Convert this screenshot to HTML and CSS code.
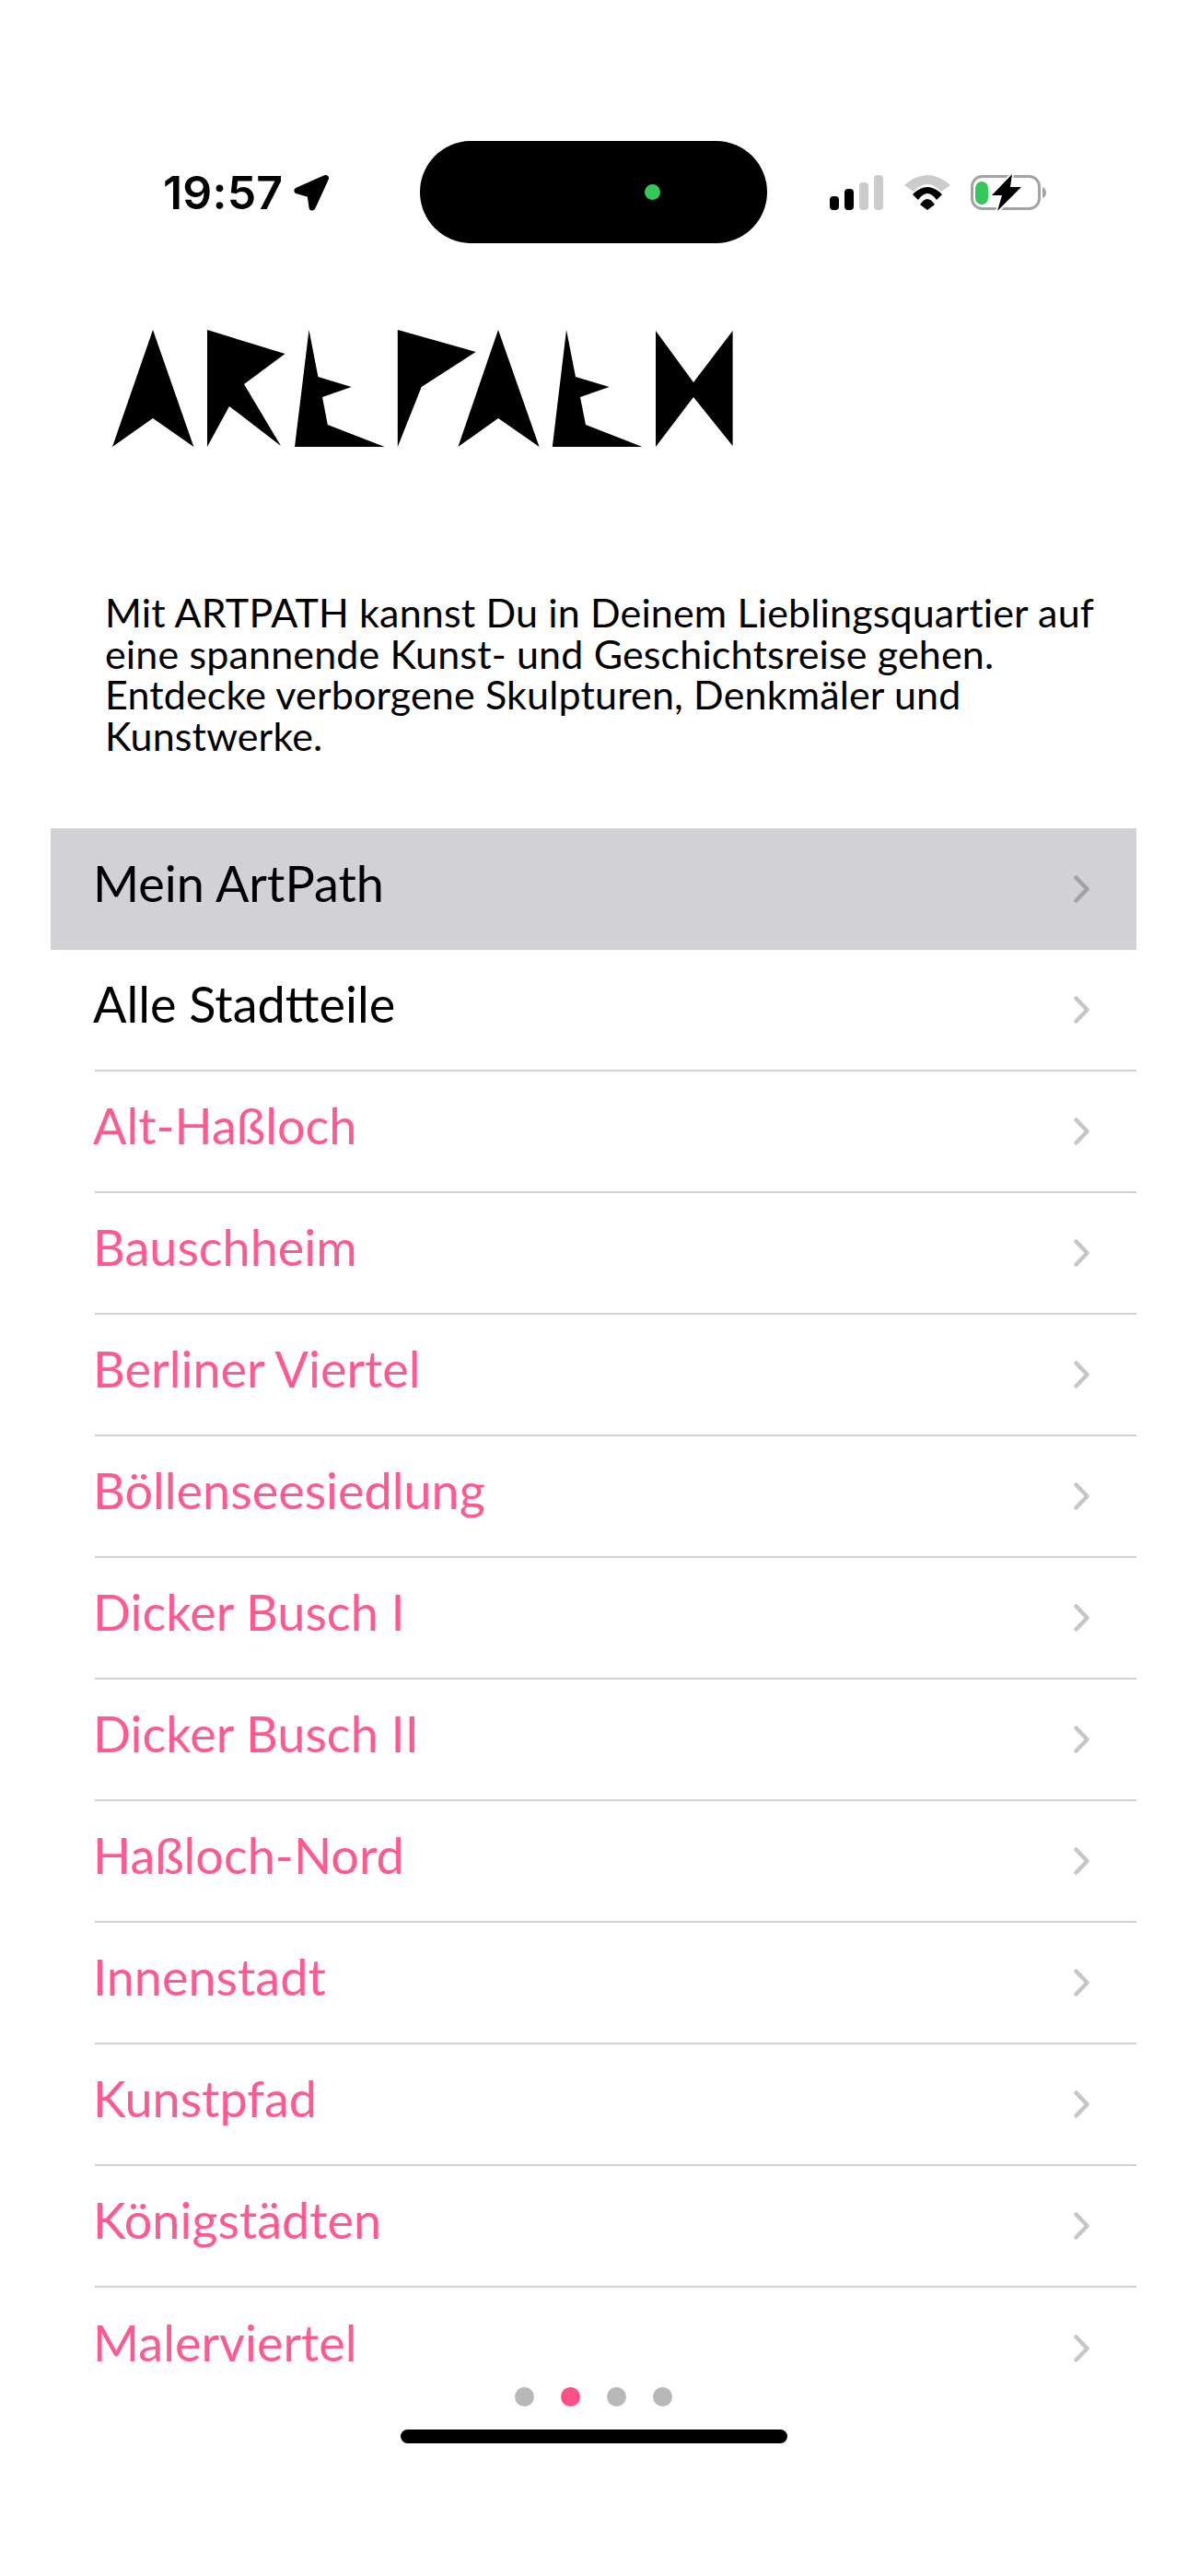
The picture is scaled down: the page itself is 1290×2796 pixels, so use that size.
FILE: index.html
```html
<!DOCTYPE html>
<html lang="de">
<head>
  <meta charset="UTF-8" />
  <meta name="viewport" content="width=device-width, initial-scale=1" />
  <title>ArtPath</title>
  <link rel="stylesheet" href="styles.css">
</head>

<body>
  <!-- Status bar -->
  <header class="status-bar">
    <div class="status-time">
      <span class="clock">19:57</span>
      <svg class="location-icon" viewBox="0 0 38 40" aria-hidden="true">
        <polygon points="34.5,4.5 4,18 18,22 20,36"/>
      </svg>
    </div>
    <div class="island"><span class="island-dot"></span></div>
    <div class="status-icons">
      <svg class="signal-icon" viewBox="0 0 59 38" aria-hidden="true">
        <rect x="0" y="23" width="10" height="15" rx="4" fill="#000"/>
        <rect x="16" y="15" width="10" height="23" rx="4" fill="#000"/>
        <rect x="32" y="8" width="10" height="30" rx="4" fill="#ccc"/>
        <rect x="48" y="0" width="10" height="38" rx="4" fill="#ccc"/>
      </svg>
      <svg class="wifi-icon" viewBox="0 0 50 38" aria-hidden="true">
        <path fill="#ccc" d="M0 11 Q25 -11 50 11 L40 18 Q25 2 10 18Z"/>
        <path fill="#000" d="M9 21 Q25 5 41 21 L35 27 Q25 13 15 27Z"/>
        <path fill="#000" d="M25 38 L17 32 Q25 20 33 32Z"/>
      </svg>
      <svg class="battery-icon" viewBox="0 0 82 40" aria-hidden="true">
        <rect x="1.5" y="2.5" width="73" height="35" rx="11" fill="none" stroke="#a3a3a3" stroke-width="3"/>
        <path fill="#a3a3a3" d="M78 14 Q82 16 82 20 Q82 24 78 26Z"/>
        <rect x="5" y="8" width="14" height="25" rx="7" fill="#34c759"/>
        <polygon class="bolt" points="45,0 23,23 34,23 29,40 55,14 43,14"/>
      </svg>
    </div>
  </header>

  <!-- Logo -->
  <svg class="logo" viewBox="0 0 674 127" role="img" aria-label="ARTPATH">
    <polygon points="44,0 88.4,127 44,96 0,127"/>
    <polygon points="103,0 187.5,26 143,59 183,126 127,83 103,127"/>
    <polygon points="213.5,0 223.4,51 259.7,62 228,73 233.8,103 295.6,127 198,127"/>
    <polygon points="309.8,0 394.7,24 335.7,62 309.8,127"/>
    <polygon points="419,0 463.6,127 419,96 375.4,127"/>
    <polygon points="493,0 503,51 539.6,62 508,73 514,103 575.4,127 477.8,127"/>
    <polygon points="590,1 631,57 673.6,1 673.6,126 631,73 590,127"/>
  </svg>

  <p class="intro">
    Mit ARTPATH kannst Du in Deinem Lieblingsquartier auf<br>
    eine spannende Kunst- und Geschichtsreise gehen.<br>
    Entdecke verborgene Skulpturen, Denkmäler und<br>
    Kunstwerke.
  </p>

  <!-- District list -->
  <ul class="menu">
    <li class="menu-row selected"><div class="menu-inner"><span class="menu-label">Mein ArtPath</span><svg class="chevron" viewBox="0 0 17 30"><path d="M2.5 2.5 L14.5 15 L2.5 27.5"/></svg></div></li>
    <li class="menu-row dark"><div class="menu-inner"><span class="menu-label">Alle Stadtteile</span><svg class="chevron" viewBox="0 0 17 30"><path d="M2.5 2.5 L14.5 15 L2.5 27.5"/></svg></div></li>
    <li class="menu-row"><div class="menu-inner"><span class="menu-label">Alt-Haßloch</span><svg class="chevron" viewBox="0 0 17 30"><path d="M2.5 2.5 L14.5 15 L2.5 27.5"/></svg></div></li>
    <li class="menu-row"><div class="menu-inner"><span class="menu-label">Bauschheim</span><svg class="chevron" viewBox="0 0 17 30"><path d="M2.5 2.5 L14.5 15 L2.5 27.5"/></svg></div></li>
    <li class="menu-row"><div class="menu-inner"><span class="menu-label">Berliner Viertel</span><svg class="chevron" viewBox="0 0 17 30"><path d="M2.5 2.5 L14.5 15 L2.5 27.5"/></svg></div></li>
    <li class="menu-row"><div class="menu-inner"><span class="menu-label">Böllenseesiedlung</span><svg class="chevron" viewBox="0 0 17 30"><path d="M2.5 2.5 L14.5 15 L2.5 27.5"/></svg></div></li>
    <li class="menu-row"><div class="menu-inner"><span class="menu-label">Dicker Busch I</span><svg class="chevron" viewBox="0 0 17 30"><path d="M2.5 2.5 L14.5 15 L2.5 27.5"/></svg></div></li>
    <li class="menu-row"><div class="menu-inner"><span class="menu-label">Dicker Busch II</span><svg class="chevron" viewBox="0 0 17 30"><path d="M2.5 2.5 L14.5 15 L2.5 27.5"/></svg></div></li>
    <li class="menu-row"><div class="menu-inner"><span class="menu-label">Haßloch-Nord</span><svg class="chevron" viewBox="0 0 17 30"><path d="M2.5 2.5 L14.5 15 L2.5 27.5"/></svg></div></li>
    <li class="menu-row"><div class="menu-inner"><span class="menu-label">Innenstadt</span><svg class="chevron" viewBox="0 0 17 30"><path d="M2.5 2.5 L14.5 15 L2.5 27.5"/></svg></div></li>
    <li class="menu-row"><div class="menu-inner"><span class="menu-label">Kunstpfad</span><svg class="chevron" viewBox="0 0 17 30"><path d="M2.5 2.5 L14.5 15 L2.5 27.5"/></svg></div></li>
    <li class="menu-row"><div class="menu-inner"><span class="menu-label">Königstädten</span><svg class="chevron" viewBox="0 0 17 30"><path d="M2.5 2.5 L14.5 15 L2.5 27.5"/></svg></div></li>
    <li class="menu-row last"><div class="menu-inner"><span class="menu-label">Malerviertel</span><svg class="chevron" viewBox="0 0 17 30"><path d="M2.5 2.5 L14.5 15 L2.5 27.5"/></svg></div></li>
  </ul>

  <!-- Page dots and home indicator -->
  <footer class="bottom-bar">
    <div class="pager">
      <span class="dot"></span>
      <span class="dot active"></span>
      <span class="dot"></span>
      <span class="dot"></span>
    </div>
    <div class="home-indicator"></div>
  </footer>
</body>
</html>
```

FILE: styles.css
```css
/* Base styles */
html, body {
  margin: 0;
  padding: 0;
}

body {
  position: relative;
  width: 1290px;
  height: 2796px;
  overflow: hidden;
  background: #fff;
  color: #000;
  font-family: Lato, 'Noto Sans', sans-serif;
}

/* Status bar */
.status-bar {
  display: grid;
  grid-template-columns: 456px 377px 1fr;
  align-items: center;
  height: 111px;
  padding-top: 153px;
}

.status-time {
  display: flex;
  align-items: center;
  gap: 12px;
  padding-left: 177px;
}

.clock {
  font-family: Inter, sans-serif;
  font-size: 50px;
  font-weight: 600;
  line-height: 1;
  letter-spacing: 0.2px;
}

.location-icon {
  width: 38px;
  height: 40px;
}

.location-icon polygon {
  fill: #000;
  stroke: #000;
  stroke-width: 7;
  stroke-linejoin: round;
}

.island {
  display: flex;
  align-items: center;
  justify-content: flex-end;
  height: 111px;
  padding-right: 116px;
  box-sizing: border-box;
  background: #000;
  border-radius: 56px;
}

.island-dot {
  width: 17px;
  height: 17px;
  background: #34c759;
  border-radius: 50%;
}

.status-icons {
  display: flex;
  align-items: center;
  padding-left: 68px;
}

.signal-icon {
  width: 59px;
  height: 38px;
}

.wifi-icon {
  width: 50px;
  height: 38px;
  margin-left: 22px;
}

.battery-icon {
  width: 82px;
  height: 40px;
  margin-left: 22px;
}

.bolt {
  fill: #000;
  stroke: #fff;
  stroke-width: 4;
  stroke-linejoin: round;
  paint-order: stroke;
}

/* Logo */
.logo {
  display: block;
  width: 674px;
  height: 127px;
  margin: 94px 0 0 122px;
  fill: #000;
}

/* Intro text */
.intro {
  margin: 158px 0 0;
  padding-left: 114px;
  font-size: 43px;
  line-height: 44.6px;
  letter-spacing: 0.15px;
  color: #000;
}

/* Menu */
.menu {
  list-style: none;
  margin: 78px 56px 0 55px;
  padding: 0;
}

.menu-row {
  padding-left: 48px;
  color: #ff5a8e;
}

.menu-inner {
  display: flex;
  align-items: center;
  justify-content: space-between;
  height: 132px;
  box-sizing: border-box;
  padding-right: 51px;
  border-bottom: 2px solid #d2d2d4;
}

.menu-label {
  font-size: 54px;
  line-height: 1;
  margin-bottom: 12px;
  margin-left: -2px;
}

.chevron {
  width: 17px;
  height: 30px;
  fill: none;
  stroke: #c6c6c8;
  stroke-width: 4.5;
  stroke-linecap: round;
  stroke-linejoin: round;
}

.menu-row.dark {
  color: #000;
}

.menu-row.selected {
  background: #d1d1d6;
  color: #000;
}

.menu-row.selected .menu-inner,
.menu-row.last .menu-inner {
  border-bottom: none;
}

.menu-row.selected .chevron {
  stroke: #a2a2a6;
}

/* Bottom overlay */
.bottom-bar {
  position: absolute;
  left: 0;
  right: 0;
  top: 2591px;
  display: flex;
  flex-direction: column;
  align-items: center;
}

.pager {
  display: flex;
  gap: 29px;
  margin-left: -1px;
}

.dot {
  width: 21px;
  height: 21px;
  background: #b8b8b8;
  border-radius: 50%;
}

.dot.active {
  background: #ff4f87;
}

.home-indicator {
  width: 420px;
  height: 15px;
  margin-top: 25px;
  background: #000;
  border-radius: 8px;
}
```
